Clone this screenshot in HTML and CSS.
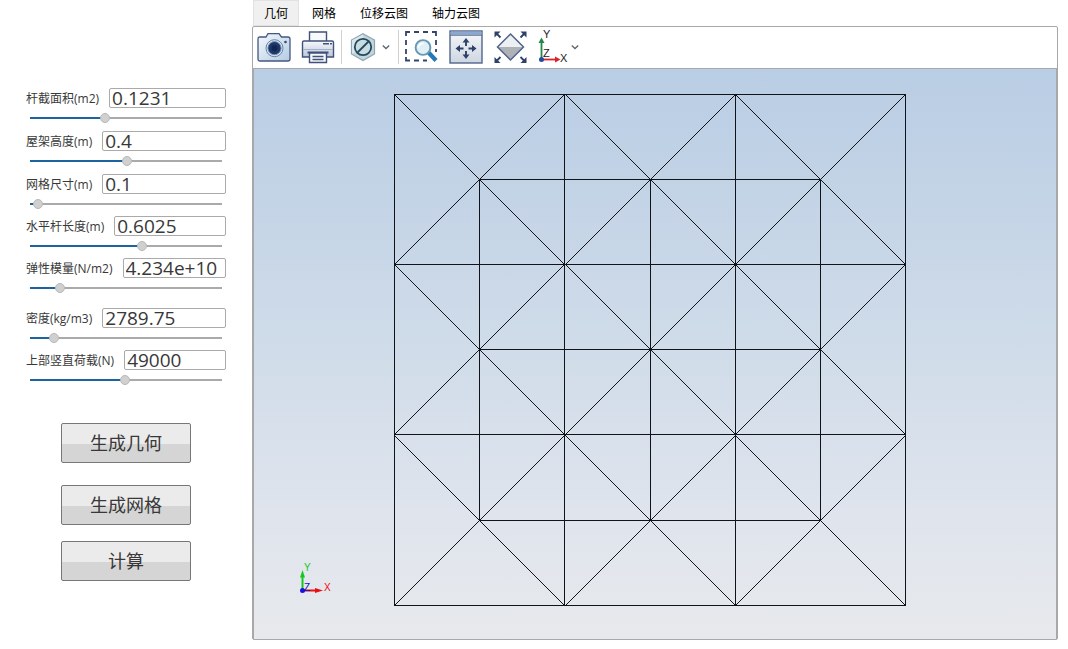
FILE: index.html
```html
<!DOCTYPE html>
<html lang="zh-CN">
<head>
<meta charset="utf-8">
<title>网架分析</title>
<link rel="stylesheet" href="styles.css">
</head>
<body>
<form class="sidebar">
  <div class="fields">
    <div class="field">
      <div class="field-row"><label for="area">杆截面积(m2)</label><input class="value" id="area" type="text" value="0.1231"></div>
      <input class="slider" type="range" aria-label="杆截面积" min="0" max="1000" value="385" style="--v:.385">
    </div>
    <div class="field">
      <div class="field-row"><label for="height">屋架高度(m)</label><input class="value" id="height" type="text" value="0.4"></div>
      <input class="slider" type="range" aria-label="屋架高度" min="0" max="1000" value="505" style="--v:.505">
    </div>
    <div class="field">
      <div class="field-row"><label for="mesh">网格尺寸(m)</label><input class="value" id="mesh" type="text" value="0.1"></div>
      <input class="slider" type="range" aria-label="网格尺寸" min="0" max="1000" value="16" style="--v:.016">
    </div>
  </div>
  <div class="fields compact">
    <div class="field">
      <div class="field-row"><label for="length">水平杆长度(m)</label><input class="value" id="length" type="text" value="0.6025"></div>
      <input class="slider" type="range" aria-label="水平杆长度" min="0" max="1000" value="588" style="--v:.588">
    </div>
    <div class="field">
      <div class="field-row"><label for="modulus">弹性模量(N/m2)</label><input class="value" id="modulus" type="text" value="4.234e+10"></div>
      <input class="slider" type="range" aria-label="弹性模量" min="0" max="1000" value="137" style="--v:.137">
    </div>
  </div>
  <div class="fields compact loads">
    <div class="field">
      <div class="field-row"><label for="density">密度(kg/m3)</label><input class="value" id="density" type="text" value="2789.75"></div>
      <input class="slider" type="range" aria-label="密度" min="0" max="1000" value="104" style="--v:.104">
    </div>
    <div class="field">
      <div class="field-row"><label for="load">上部竖直荷载(N)</label><input class="value" id="load" type="text" value="49000"></div>
      <input class="slider" type="range" aria-label="上部竖直荷载" min="0" max="1000" value="495" style="--v:.495">
    </div>
  </div>
  <div class="actions">
    <button class="action generate" type="button">生成几何</button>
    <button class="action" type="button">生成网格</button>
    <button class="action" type="button">计算</button>
  </div>
</form>

<main class="main">
  <nav class="tabs">
    <button class="tab active" type="button">几何</button>
    <button class="tab" type="button">网格</button>
    <button class="tab" type="button">位移云图</button>
    <button class="tab" type="button">轴力云图</button>
  </nav>
  <section class="panel">
    <div class="toolbar">
      <div class="group">
        <button class="tool" type="button" aria-label="截图">
          <svg width="34" height="34" viewBox="0 0 34 34">
            <defs><linearGradient id="cam" x1="0" y1="0" x2="1" y2="1"><stop offset="0" stop-color="#f4f8fc"/><stop offset="1" stop-color="#b4cbe4"/></linearGradient></defs>
            <path d="M2.500 7H9l2-3.300h11L24.500 7H31q2 0 2 2v20q0 2-2 2H3q-2 0-2-2V9q0-2 1.500-2z" fill="url(#cam)" stroke="#44587f" stroke-width="1.300"/>
            <circle cx="17.500" cy="18.200" r="8.500" fill="#dce8f4" stroke="#6b81a3"/>
            <circle cx="17.500" cy="18.200" r="6.600" fill="#1e3768" stroke="#6f95bb"/>
            <circle cx="17.500" cy="18.200" r="3" fill="#122650"/>
            <circle cx="28.500" cy="12" r="1.300" fill="#33496f"/>
          </svg>
        </button>
        <button class="tool" type="button" aria-label="打印">
          <svg width="34" height="34" viewBox="0 0 34 34">
            <defs><linearGradient id="prn" x1="0" y1="0" x2="0" y2="1"><stop offset="0" stop-color="#f7f9fc"/><stop offset="1" stop-color="#b9c5d8"/></linearGradient></defs>
            <path d="M8.500 11V2h17v9" fill="#f7f9fb" stroke="#40517a" stroke-width="1.400"/>
            <path d="M3 11h28q1.500 0 1.500 1.500V27H1.500V12.500Q1.500 11 3 11z" fill="url(#prn)" stroke="#40517a" stroke-width="1.400"/>
            <path d="M2 19.500h30" stroke="#a3b0c6"/>
            <path d="M22 13.700h6M29 13.700h2" stroke="#40517a" stroke-width="1.400"/>
            <path d="M6.500 22.500h21" stroke="#40517a" stroke-width="2"/>
            <path d="M8.500 23v9.500h17V23z" fill="#f5f8fb" stroke="#40517a" stroke-width="1.400"/>
            <path d="M11.500 26.500h11M11.500 29.500h11" stroke="#40517a" stroke-width="1.400"/>
          </svg>
        </button>
      </div>
      <span class="separator"></span>
      <div class="group dropdown">
        <button class="tool" type="button" aria-label="透明度">
          <svg width="30" height="34" viewBox="0 0 30 34">
            <path d="M15 3.700 26.500 10v14L15 30.500 3.500 24V10z" fill="#c3d4dc" stroke="#8ca5b0" stroke-width="1.200"/>
            <path d="M15 4.500v12.700L4 24V10.300z" fill="#dce6ea"/>
            <circle cx="15" cy="17" r="8.200" fill="#c9dce2" stroke="#204a5e" stroke-width="1.800"/>
            <path d="M9.500 22.500 20.500 11.500" stroke="#204a5e" stroke-width="1.800"/>
          </svg>
        </button>
        <button class="tool" type="button" aria-label="透明度选项">
          <svg width="12" height="34" viewBox="0 0 12 34"><path d="M2.800 15.500 6 18.500l3.200-3" fill="none" stroke="#596670" stroke-width="1.300"/></svg>
        </button>
      </div>
      <span class="separator"></span>
      <div class="group">
        <button class="tool" type="button" aria-label="框选缩放">
          <svg width="34" height="34" viewBox="0 0 34 34">
            <path d="M1 6V2h4M9 2h5M18 2h5M27 2h4v4M31 10v5M1 10v5M1 19v5M1 27v3.500h4M9 30.500h5M18 30.500h4M31 19v3" fill="none" stroke="#33456d" stroke-width="1.800"/>
            <path d="M23.500 22.500 31 30.500" stroke="#2878b4" stroke-width="4.200"/>
            <circle cx="18" cy="17.500" r="7.400" fill="#e1f0f7" stroke="#6699b4" stroke-width="1.900"/>
            <path d="M13.500 17.500a4.500 4.500 0 0 1 5-4" fill="none" stroke="#fff" stroke-width="1.500"/>
          </svg>
        </button>
        <button class="tool" type="button" aria-label="平移">
          <svg width="34" height="34" viewBox="0 0 34 34">
            <defs><linearGradient id="pan" x1="0" y1="0" x2="0" y2="1"><stop offset="0" stop-color="#f6f8fa"/><stop offset="1" stop-color="#ced6e1"/></linearGradient></defs>
            <rect x="1" y="1" width="32" height="32" fill="url(#pan)" stroke="#50658c" stroke-width="1.400"/>
            <rect x="1.700" y="1.700" width="30.600" height="3" fill="#8ba9d0"/>
            <path d="M1 5.200h32" stroke="#50658c"/>
            <path d="M17 10v6M17 21v6M8.500 18.500h6M19.500 18.500h6" stroke="#2e416a" stroke-width="1.900"/>
            <path d="M13.500 12.500 17 8l3.500 4.500zM13.500 24.500 17 29l3.500-4.500zM11 15v7l-4.500-3.500zM23 15v7l4.500-3.500z" fill="#2e416a"/>
          </svg>
        </button>
        <button class="tool" type="button" aria-label="适合窗口">
          <svg width="34" height="34" viewBox="0 0 34 34">
            <path d="M17.500 4 30.500 17h-26z" fill="#edf0f2"/>
            <path d="M4.500 17h26l-13 13z" fill="#aeb1b5"/>
            <path d="M17.500 4 30.500 17l-13 13-13-13z" fill="none" stroke="#50648a" stroke-width="1.500"/>
            <path d="M7.500 7.500 3 3M27.500 7.500 32 3M7.500 27 3 31.500M27.500 27l4.500 4.500" stroke="#2e416a" stroke-width="1.800"/>
            <path d="M1.500 1.500h6l-6 6zM33.500 1.500h-6l6 6zM1.500 33h6l-6-6zM33.500 33h-6l6-6z" fill="#2e416a"/>
          </svg>
        </button>
        <div class="group dropdown">
          <button class="tool" type="button" aria-label="视图方向">
            <svg class="axes" width="30" height="34" viewBox="0 0 30 34">
              <path d="M4.500 29V13" stroke="#22884a" stroke-width="1.800"/>
              <path d="M1.500 13 4.500 7.500 7.500 13z" fill="#22884a"/>
              <path d="M5 29.500h14" stroke="#d8232a" stroke-width="1.800"/>
              <path d="M18 26.500 23.500 29.500 18 32.500z" fill="#d8232a"/>
              <circle cx="4.500" cy="29.500" r="2.500" fill="#2548a0"/>
              <text x="6" y="8">Y</text><text x="6" y="27">Z</text><text x="23" y="32">X</text>
            </svg>
          </button>
          <button class="tool" type="button" aria-label="视图方向选项">
            <svg width="12" height="34" viewBox="0 0 12 34"><path d="M2.800 15.500 6 18.500l3.200-3" fill="none" stroke="#596670" stroke-width="1.300"/></svg>
          </button>
        </div>
      </div>
    </div>
    <div class="viewport">
      <svg class="scene" viewBox="0 0 802 570" role="img" aria-label="几何模型">
        <g class="wire">
          <!-- upper chord grid, lower chord grid, then the webs around each lower node -->
          <path d="M140.500 25.500H651.500V536.500H140.500ZM310.500 25.500V536.500M481.500 25.500V536.500M140.500 195.500H651.500M140.500 365.500H651.500"/>
          <path d="M225.500 110.500H566.500V451.500H225.500ZM396.500 110.500V451.500M225.500 280.500H566.500"/>
          <path d="M140.500 25.500l170 170M310.500 25.500l-170 170M311.500 25.500l170 170M481.500 25.500l-170 170M481.500 25.500l170 170M651.500 25.500l-170 170"/>
          <path d="M140.500 195.500l170 170M310.500 195.500l-170 170M311.500 195.500l170 170M481.500 195.500l-170 170M481.500 195.500l170 170M651.500 195.500l-170 170"/>
          <path d="M140.500 366.500l170 170M310.500 366.500l-170 170M311.500 366.500l170 170M481.500 366.500l-170 170M481.500 366.500l170 170M651.500 366.500l-170 170"/>
        </g>
        <g class="triad">
          <path d="M48.500 521V508" stroke="#12c81e" stroke-width="2"/>
          <path d="M46 508.500 48.500 501 51 508.500z" fill="#12c81e"/>
          <path d="M49 521.500h14" stroke="#e81010" stroke-width="2"/>
          <path d="M61 519 69 521.500 61 524z" fill="#e81010"/>
          <circle cx="48.500" cy="521.500" r="2.500" fill="#1414e0"/>
          <text x="50" y="502" fill="#12c81e">Y</text>
          <text x="50" y="522" fill="#1414c8">Z</text>
          <text x="70" y="522" fill="#e81010">X</text>
        </g>
      </svg>
    </div>
  </section>
</main>
</body>
</html>
```
FILE: styles.css
```css
* {
  box-sizing: border-box;
}

body {
  margin: 0;
  min-height: 100vh;
  display: flex;
  background: #fff;
  color: #383838;
  font-family: "Open Sans", "Noto Sans CJK SC", sans-serif;
  font-size: 12px;
}

button,
input {
  margin: 0;
  color: inherit;
  font-family: inherit;
}

/* Parameter sidebar */
.sidebar {
  flex: 0 0 252px;
  min-width: 0;
  padding: 88px 26px 24px;
}

.fields {
  display: flex;
  flex-direction: column;
  gap: 8px;
  margin-bottom: 7px;
}

.compact {
  gap: 7px;
}

.loads {
  margin-top: 15px;
}

.field {
  display: flex;
  flex-direction: column;
  gap: 5px;
}

.field-row {
  display: flex;
  align-items: center;
  gap: 10px;
  height: 20px;
}

.field-row label {
  flex: none;
  padding-top: 2px;
  line-height: 20px;
}

.value {
  flex: 1;
  min-width: 0;
  height: 20px;
  padding: 0 0 0 2px;
  border: 1px solid #aaa;
  border-radius: 2px;
  background: #fff;
  font-size: 19px;
  line-height: 18px;
}

.slider {
  appearance: none;
  min-width: 0;
  height: 10px;
  margin: 0 4px;
  background: transparent;
}

.slider::-webkit-slider-runnable-track {
  height: 2px;
  background: linear-gradient(to right, #1c63a0 calc(5px + (100% - 10px) * var(--v)), #aaa 0);
}

.slider::-webkit-slider-thumb {
  appearance: none;
  width: 10px;
  height: 10px;
  margin-top: -4px;
  border: 1px solid #b8b8b8;
  border-radius: 50%;
  background: #d0d0d0;
}

.actions {
  display: flex;
  flex-direction: column;
  align-items: center;
  gap: 16px;
  margin-top: 38px;
}

.action {
  width: 130px;
  height: 40px;
  padding: 0 0 2px;
  border: 1px solid #777;
  border-radius: 2px;
  background: linear-gradient(#ebebeb 52%, #d5d5d5 52%);
  font-size: 18px;
}

.generate {
  margin-bottom: 6px;
}

/* Tabs and viewer */
.main {
  flex: 1;
  min-width: 0;
  display: flex;
  flex-direction: column;
  margin: 0 10px 9px 0;
}

.tabs {
  display: flex;
  gap: 2px;
  height: 26px;
  padding-left: 1px;
}

.tab {
  padding: 0 11px;
  border: 0;
  background: none;
  color: #000;
  font-size: 12px;
}

.active {
  background: #f0f0f0;
  box-shadow: inset 0 0 0 1px #e2e2e2;
}

.panel {
  flex: 1;
  display: flex;
  flex-direction: column;
  border: 1px solid #a8a8a8;
  border-radius: 2px;
}

.toolbar {
  display: flex;
  align-items: flex-start;
  height: 42px;
  padding: 3px 4px 0;
  border-bottom: 1px solid #a8a8a8;
}

.group {
  display: flex;
  gap: 10px;
}

.dropdown {
  gap: 2px;
}

.separator {
  width: 1px;
  height: 34px;
  margin: 0 6px;
  background: #d0d0d0;
}

.tool {
  display: block;
  padding: 0;
  border: 0;
  background: none;
}

.tool svg {
  display: block;
  overflow: visible;
}

.axes text {
  fill: #222;
  font: 11px "Liberation Sans", sans-serif;
}

.viewport {
  flex: 1;
  display: flex;
  border: solid #a8a8a8;
  border-width: 0 1px;
  background: linear-gradient(#b9cde4, #d0dce9 50%, #dfe4ed 78%, #e7e9ec);
}

.scene {
  flex: 1;
  min-width: 0;
}

.wire {
  fill: none;
  stroke: #101418;
  stroke-width: 1;
  shape-rendering: crispEdges;
}

.triad text {
  font: 10px "Liberation Sans", sans-serif;
}
```
